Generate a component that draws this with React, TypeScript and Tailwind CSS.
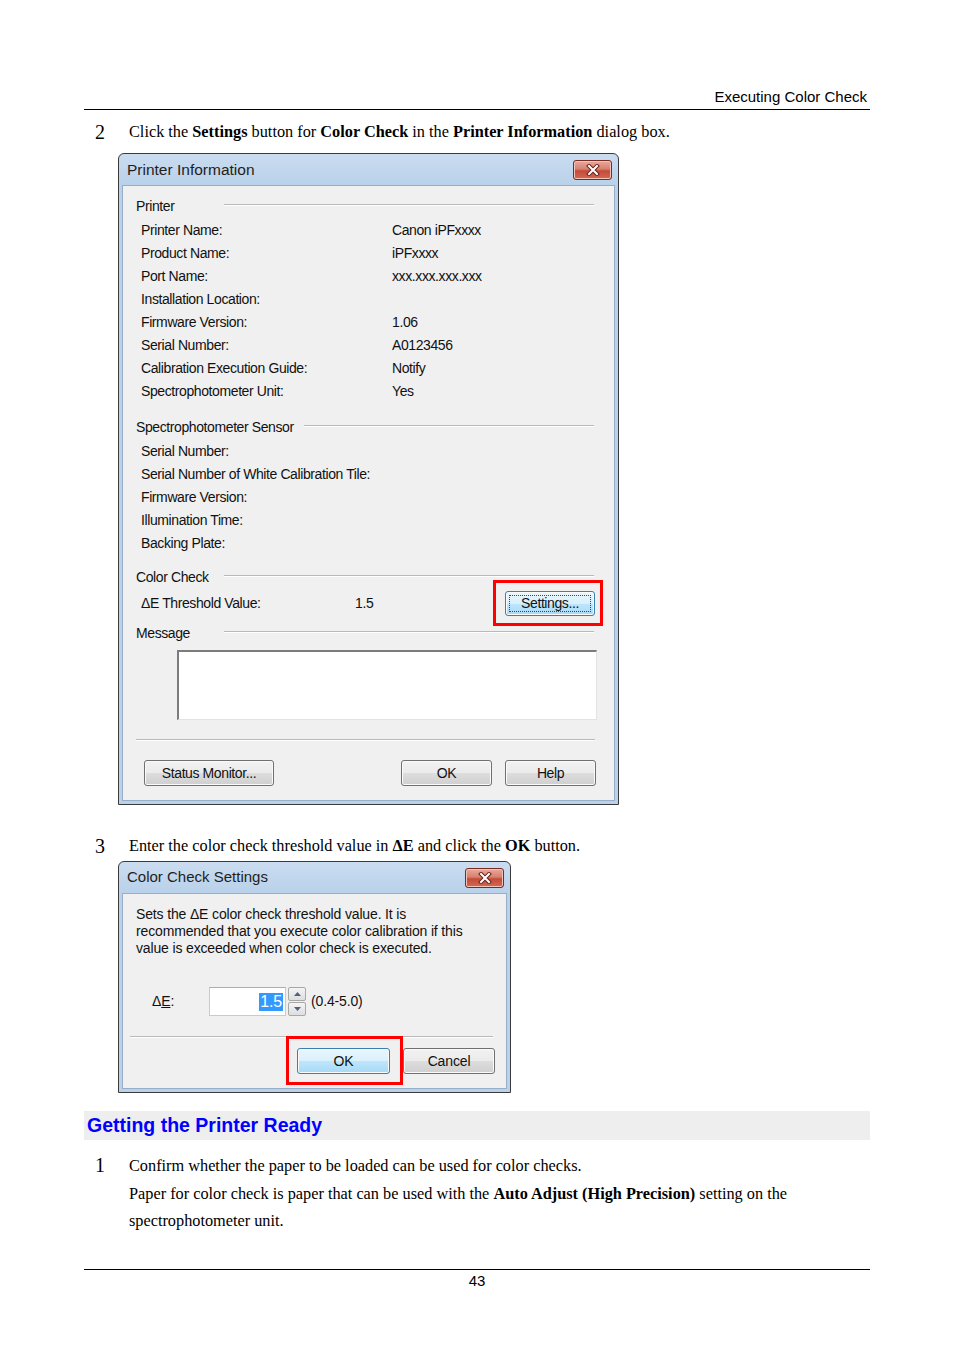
import React from "react";

const sans = "font-['Liberation_Sans',Arial,sans-serif]";
const serif = "font-['Liberation_Serif','Times_New_Roman',serif]";

const greyBtn =
  "border-[#707070] bg-[linear-gradient(to_bottom,#f2f2f2_0%,#ebebeb_50%,#dddddd_51%,#cfcfcf_100%)]";
const blueBtn =
  "border-[#3c7fb1] bg-[linear-gradient(to_bottom,#eaf6fd_0%,#d9f0fc_50%,#bee6fd_51%,#a7d9f5_100%)]";

function WinButton({
  children,
  className,
  blue,
  focus,
}: {
  children: React.ReactNode;
  className: string;
  blue?: boolean;
  focus?: boolean;
}) {
  return (
    <div
      className={
        "relative flex items-center justify-center rounded-[3px] border shadow-[inset_0_0_0_1px_#fafafa] " +
        (blue ? blueBtn : greyBtn) +
        " " +
        className
      }
    >
      {focus && <span className="absolute inset-[3px] border border-dotted border-[#444]" />}
      <span className="relative">{children}</span>
    </div>
  );
}

function CloseButton() {
  return (
    <div className="flex h-[20px] w-[39px] items-center justify-center rounded-[3px] border border-[#7a2a20] bg-[linear-gradient(to_bottom,#e9a99c_0%,#d7806f_45%,#c44a37_55%,#d26a55_100%)] shadow-[inset_0_0_0_1px_#f2c4b8]">
      <svg width="14" height="12" viewBox="0 0 14 12">
        <path d="M3 2 L11 10 M11 2 L3 10" stroke="#6b2118" strokeWidth="4" strokeLinecap="square" />
        <path d="M3 2 L11 10 M11 2 L3 10" stroke="#ffffff" strokeWidth="2" strokeLinecap="square" />
      </svg>
    </div>
  );
}

function Dialog({
  title,
  titleClass,
  className,
  children,
}: {
  title: string;
  titleClass: string;
  className: string;
  children: React.ReactNode;
}) {
  return (
    <div
      className={
        "flex flex-col rounded-t-[6px] border border-[#3a3a3a] bg-[linear-gradient(to_bottom,#cadcf0_0px,#b9d1ea_31px)] " +
        className
      }
    >
      <div className="flex h-[31px] items-center justify-between pl-[8px] pr-[6px]">
        <span className={"text-[#1e1e1e] " + titleClass}>{title}</span>
        <CloseButton />
      </div>
      <div className="mx-[3px] mb-[3px] border border-[#98aec6] bg-[#f0f0f0]">{children}</div>
    </div>
  );
}

function GroupHeader({ title }: { title: string }) {
  return (
    <div className="flex h-[20px] items-center pl-[13px] pr-[20px]">
      <span className="min-w-[88px] pr-[10px]">{title}</span>
      <div className="-mt-[3px] h-[2px] flex-1 border-t border-b border-t-[#b9b9b9] border-b-white" />
    </div>
  );
}

function InfoRow({ label, value }: { label: string; value?: string }) {
  return (
    <div className="flex h-[23px] items-center pl-[18px]">
      <span className="w-[251px] shrink-0">{label}</span>
      <span>{value}</span>
    </div>
  );
}

const printerRows = [
  ["Printer Name:", "Canon iPFxxxx"],
  ["Product Name:", "iPFxxxx"],
  ["Port Name:", "xxx.xxx.xxx.xxx"],
  ["Installation Location:", ""],
  ["Firmware Version:", "1.06"],
  ["Serial Number:", "A0123456"],
  ["Calibration Execution Guide:", "Notify"],
  ["Spectrophotometer Unit:", "Yes"],
];

const sensorRows = [
  "Serial Number:",
  "Serial Number of White Calibration Tile:",
  "Firmware Version:",
  "Illumination Time:",
  "Backing Plate:",
];

function PrinterInformation() {
  return (
    <Dialog
      title="Printer Information"
      titleClass="text-[15.5px] tracking-[0px]"
      className="ml-[34px] w-[501px]"
    >
      <div className="pb-[14px] pt-[10px] text-[14px] tracking-[-0.4px] text-[#111]">
        <GroupHeader title="Printer" />
        <div className="mt-[3px]">
          {printerRows.map(([l, v]) => (
            <InfoRow key={l} label={l} value={v} />
          ))}
        </div>

        <div className="mt-[14px]">
          <GroupHeader title="Spectrophotometer Sensor" />
        </div>
        <div className="mt-[3px]">
          {sensorRows.map((l) => (
            <InfoRow key={l} label={l} />
          ))}
        </div>

        <div className="mt-[12px]">
          <GroupHeader title="Color Check" />
        </div>
        <div className="mt-[3px] flex h-[27px] items-center pl-[18px] pr-[19px]">
          <span className="w-[214px] shrink-0">ΔE Threshold Value:</span>
          <span>1.5</span>
          <div className="flex-1" />
          <div className="relative">
            <WinButton blue focus className="h-[25px] w-[90px]">
              Settings...
            </WinButton>
            <div className="absolute -bottom-[10px] -left-[12px] -right-[8px] -top-[11px] border-[3px] border-[#ff0000]" />
          </div>
        </div>

        <div className="mt-[6px]">
          <GroupHeader title="Message" />
        </div>
        <div className="ml-[54px] mr-[17px] mt-[7px] h-[70px] border-l-2 border-t-2 border-r border-b border-l-[#7c7c7c] border-t-[#7c7c7c] border-r-[#e3e3e3] border-b-[#e3e3e3] bg-white" />

        <div className="ml-[13px] mr-[19px] mt-[19px] h-[2px] border-t border-b border-t-[#b9b9b9] border-b-white" />

        <div className="ml-[21px] mr-[18px] mt-[19px] flex items-center">
          <WinButton className="h-[26px] w-[130px]">Status Monitor...</WinButton>
          <div className="flex-1" />
          <WinButton className="h-[26px] w-[91px]">OK</WinButton>
          <WinButton className="ml-[13px] h-[26px] w-[91px]">Help</WinButton>
        </div>
      </div>
    </Dialog>
  );
}

function ColorCheckSettings() {
  return (
    <Dialog
      title="Color Check Settings"
      titleClass="text-[15px] tracking-[0px]"
      className="ml-[34px] w-[393px]"
    >
      <div className="pb-[14px] pt-[12px] text-[14px] tracking-[-0.15px] text-[#111]">
        <div className="pl-[13px] leading-[17px]">
          <div>Sets the ΔE color check threshold value. It is</div>
          <div>recommended that you execute color calibration if this</div>
          <div>value is exceeded when color check is executed.</div>
        </div>

        <div className="mt-[30px] flex h-[29px] items-center pl-[29px]">
          <span className="w-[57px] shrink-0">
            Δ<span className="underline">E</span>:
          </span>
          <div className="flex h-[29px] w-[77px] items-center justify-end border border-[#c5cbd3] border-t-[#abadb3] bg-white pr-[2px]">
            <span className="bg-[#3399ff] px-[1px] text-[16px] leading-[18px] text-white">1.5</span>
          </div>
          <div className="ml-[2px] flex h-[29px] w-[18px] flex-col gap-[1px]">
            <div className="flex flex-1 items-center justify-center rounded-[2px] border border-[#a8a8a8] bg-[linear-gradient(to_bottom,#f4f4f4,#dedede)]">
              <svg width="7" height="4" viewBox="0 0 7 4">
                <path d="M0 4 L3.5 0 L7 4 Z" fill="#4d6185" />
              </svg>
            </div>
            <div className="flex flex-1 items-center justify-center rounded-[2px] border border-[#a8a8a8] bg-[linear-gradient(to_bottom,#f4f4f4,#dedede)]">
              <svg width="7" height="4" viewBox="0 0 7 4">
                <path d="M0 0 L3.5 4 L7 0 Z" fill="#4d6185" />
              </svg>
            </div>
          </div>
          <span className="ml-[5px]">(0.4-5.0)</span>
        </div>

        <div className="ml-[7px] mr-[13px] mt-[20px] h-[2px] border-t border-b border-t-[#b9b9b9] border-b-white" />

        <div className="mr-[11px] mt-[10px] flex items-center justify-end">
          <div className="relative">
            <WinButton blue className="h-[26px] w-[93px]">
              OK
            </WinButton>
            <div className="absolute -bottom-[11px] -left-[11px] -right-[13px] -top-[12px] border-[3px] border-[#ff0000]" />
          </div>
          <WinButton className="ml-[13px] h-[26px] w-[92px]">Cancel</WinButton>
        </div>
      </div>
    </Dialog>
  );
}

function Step({ n, children, className }: { n: string; children: React.ReactNode; className: string }) {
  return (
    <div className={"flex " + className}>
      <span className="w-[45px] shrink-0 pl-[11px] text-[20px]">{n}</span>
      <div className="flex-1">{children}</div>
    </div>
  );
}

export default function App() {
  return (
    <div className="min-h-[1350px] w-[954px] bg-white text-black">
      <div className="ml-[84px] w-[786px]">
        <div className={"flex h-[110px] items-end justify-end border-b border-black pb-[3px] pr-[3px] text-[15px] leading-[18px] " + sans}>
          Executing Color Check
        </div>

        <Step n="2" className={"mt-[12px] h-[20px] items-center text-[16.3px] leading-[20px] " + serif}>
          Click the <b>Settings</b> button for <b>Color Check</b> in the <b>Printer Information</b> dialog box.
        </Step>

        <div className={"mt-[11px] " + sans}>
          <PrinterInformation />
        </div>

        <Step n="3" className={"mt-[31px] h-[20px] items-center text-[16.3px] leading-[20px] " + serif}>
          Enter the color check threshold value in <b>ΔE</b> and click the <b>OK</b> button.
        </Step>

        <div className={"mt-[5px] " + sans}>
          <ColorCheckSettings />
        </div>

        <div className={"mt-[18px] flex h-[29px] items-center bg-[#eeeeee] pl-[3px] text-[19.5px] font-bold text-[#0000ff] " + sans}>
          Getting the Printer Ready
        </div>

        <Step n="1" className={"mt-[12px] items-start text-[16.3px] leading-[27.5px] " + serif}>
          <div>Confirm whether the paper to be loaded can be used for color checks.</div>
          <div>
            Paper for color check is paper that can be used with the <b>Auto Adjust (High Precision)</b> setting on the
          </div>
          <div>spectrophotometer unit.</div>
        </Step>

        <div className={"mt-[34px] border-t border-black pt-[2px] text-center text-[15px] leading-[18px] " + sans}>
          43
        </div>
      </div>
    </div>
  );
}
